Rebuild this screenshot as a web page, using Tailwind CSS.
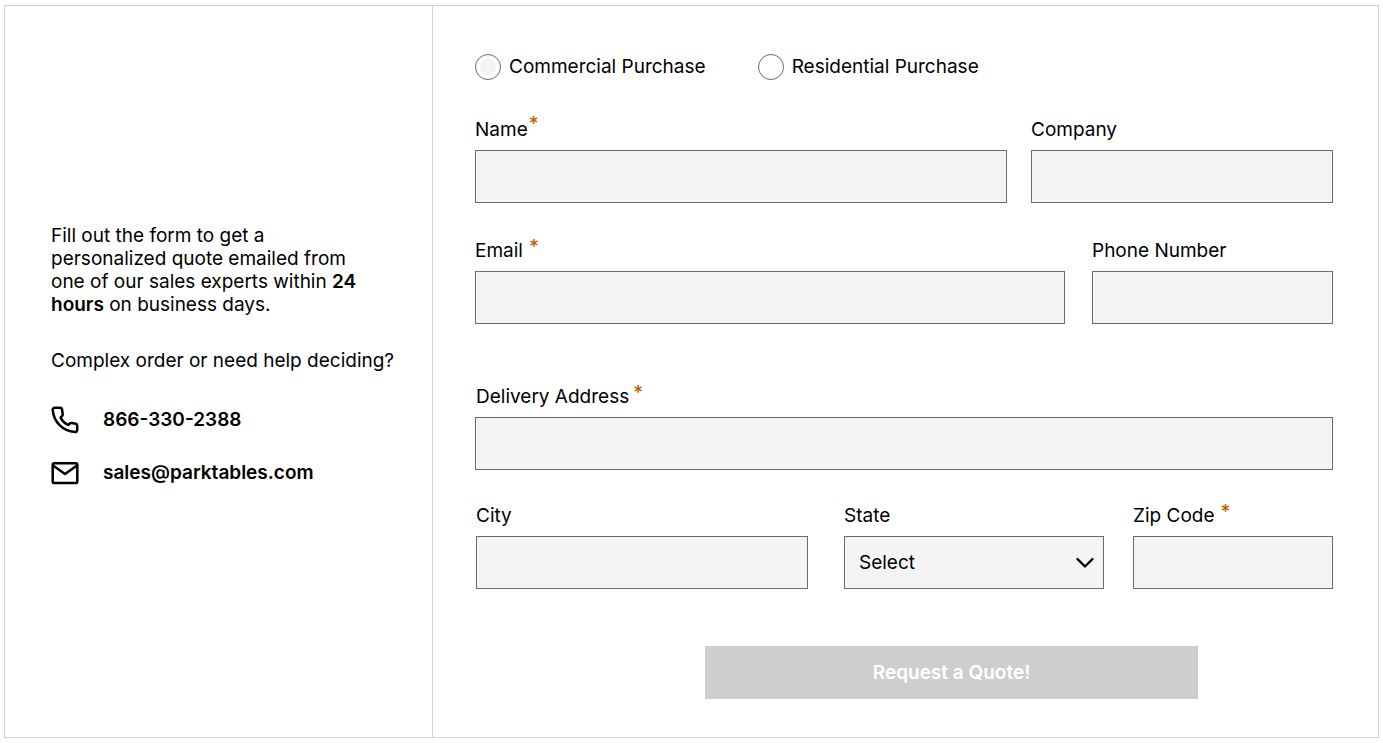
<!DOCTYPE html>
<html lang="en">
<head>
<meta charset="utf-8">
<meta name="viewport" content="width=device-width, initial-scale=1">
<title>Request a Quote</title>
<script src="https://cdn.jsdelivr.net/npm/@tailwindcss/browser@4"></script>
</head>
<body class="bg-white p-1 font-['Inter',sans-serif] text-[19px] leading-6 text-black">
<main class="mt-px flex min-h-[733px] border border-[#d3d3d3]">
  <aside class="flex w-[428px] shrink-0 flex-col justify-center border-r border-[#d3d3d3] pb-8 pl-[46px]">
    <p class="max-w-[320px] leading-[23px]">Fill out the form to get a personalized quote emailed from one of our sales experts within <strong class="font-semibold">24 hours</strong> on business days.</p>
    <p class="mt-[33px]">Complex order or need help deciding?</p>
    <a href="tel:8663302388" class="mt-[33px] flex items-center gap-6 font-semibold">
      <svg class="size-7" viewBox="0 0 28 28" fill="none" stroke="currentColor" stroke-width="2.5" stroke-linejoin="round" stroke-linecap="round" aria-hidden="true"><path d="M9.300 1.700 3.700 1.700C2.500 1.700 1.600 2.600 1.700 3.800 2.800 16 11.500 25 24 26c1.200.1 2.200-.8 2.200-2v-4.300c0-1-.6-1.700-1.500-1.900l-4.100-.8c-.7-.1-1.300.1-1.800.5l-1.700 1.500c-3.300-1.600-5.900-4.100-7.500-7.300l1.600-1.800c.5-.5.6-1.100.5-1.800L11 3.200c-.2-.9-.8-1.500-1.700-1.500Z"/></svg>
      <span>866-330-2388</span>
    </a>
    <a href="mailto:sales@parktables.com" class="mt-[25px] flex items-center gap-6 font-semibold">
      <svg class="size-7" viewBox="0 0 28 28" fill="none" stroke="currentColor" stroke-width="2.500" stroke-linejoin="round" stroke-linecap="round" aria-hidden="true"><rect x="1.700" y="4.300" width="24.600" height="19.700" rx="1.600"/><path d="M2 6.500 14 15 26 6.500"/></svg>
      <span>sales@parktables.com</span>
    </a>
  </aside>

  <form class="min-w-0 flex-1 pt-12 pr-[45px] pb-9 pl-[42px]">
    <div role="radiogroup" aria-label="Purchase type" class="flex gap-[52px]">
      <div class="flex items-center gap-2">
        <input id="commercial" type="radio" name="type" checked class="size-[26px] appearance-none rounded-full border border-[#6b6b6b] bg-white bg-clip-content p-1 checked:bg-[#f4f4f4]">
        <label for="commercial">Commercial Purchase</label>
      </div>
      <div class="flex items-center gap-2">
        <input id="residential" type="radio" name="type" class="size-[26px] appearance-none rounded-full border border-[#6b6b6b] bg-white bg-clip-content p-1 checked:bg-[#f4f4f4]">
        <label for="residential">Residential Purchase</label>
      </div>
    </div>

    <div class="mt-[38px] grid grid-cols-[532fr_302fr] gap-6">
      <div>
        <label for="name" class="mb-2 flex h-6 gap-px">Name<span class="leading-3 font-medium text-[#c85a00]">*</span></label>
        <input id="name" type="text" required class="block h-[53px] w-full border border-[#6b6b6b] bg-[#f4f4f4] px-3">
      </div>
      <div>
        <label for="company" class="mb-2 flex h-6">Company</label>
        <input id="company" type="text" class="block h-[53px] w-full border border-[#6b6b6b] bg-[#f4f4f4] px-3">
      </div>
    </div>

    <div class="mt-9 grid grid-cols-[590fr_241fr] gap-[27px]">
      <div>
        <label for="email" class="mb-2 flex h-6 gap-[6px]">Email<span class="leading-4 font-medium text-[#c85a00]">*</span></label>
        <input id="email" type="email" required class="block h-[53px] w-full border border-[#6b6b6b] bg-[#f4f4f4] px-3">
      </div>
      <div>
        <label for="phone" class="mb-2 flex h-6">Phone Number</label>
        <input id="phone" type="tel" class="block h-[53px] w-full border border-[#6b6b6b] bg-[#f4f4f4] px-3">
      </div>
    </div>

    <div class="mt-[61px]">
      <label for="address" class="mb-2 ml-px flex h-6 gap-1">Delivery Address<span class="leading-4 font-medium text-[#c85a00]">*</span></label>
      <input id="address" type="text" required class="block h-[53px] w-full border border-[#6b6b6b] bg-[#f4f4f4] px-3">
    </div>

    <div class="mt-[34px] ml-px flex">
      <div class="min-w-0 flex-[332]">
        <label for="city" class="mb-2 flex h-6">City</label>
        <input id="city" type="text" class="block h-[53px] w-full border border-[#6b6b6b] bg-[#f4f4f4] px-3">
      </div>
      <div class="ml-9 min-w-0 flex-[260]">
        <label for="state" class="mb-2 flex h-6">State</label>
        <div class="relative">
          <select id="state" class="block h-[53px] w-full appearance-none border border-[#6b6b6b] bg-[#f4f4f4] px-[14px]"><option>Select</option></select>
          <svg class="pointer-events-none absolute top-[21px] right-[10px] h-3 w-[18px]" viewBox="0 0 18 12" fill="none" stroke="currentColor" stroke-width="2.3" stroke-linecap="round" stroke-linejoin="round" aria-hidden="true"><path d="M1.500 2 9 9.500 16.500 2"/></svg>
        </div>
      </div>
      <div class="ml-[29px] min-w-0 flex-[200]">
        <label for="zip" class="mb-2 flex h-6 gap-[6px]">Zip Code<span class="leading-4 font-medium text-[#c85a00]">*</span></label>
        <input id="zip" type="text" required class="block h-[53px] w-full border border-[#6b6b6b] bg-[#f4f4f4] px-3">
      </div>
    </div>

    <button type="submit" class="mt-[57px] mr-[135px] ml-auto block h-[53px] w-[493px] max-w-full bg-[#cecece] font-semibold text-white">Request a Quote!</button>
  </form>
</main>
</body>
</html>
